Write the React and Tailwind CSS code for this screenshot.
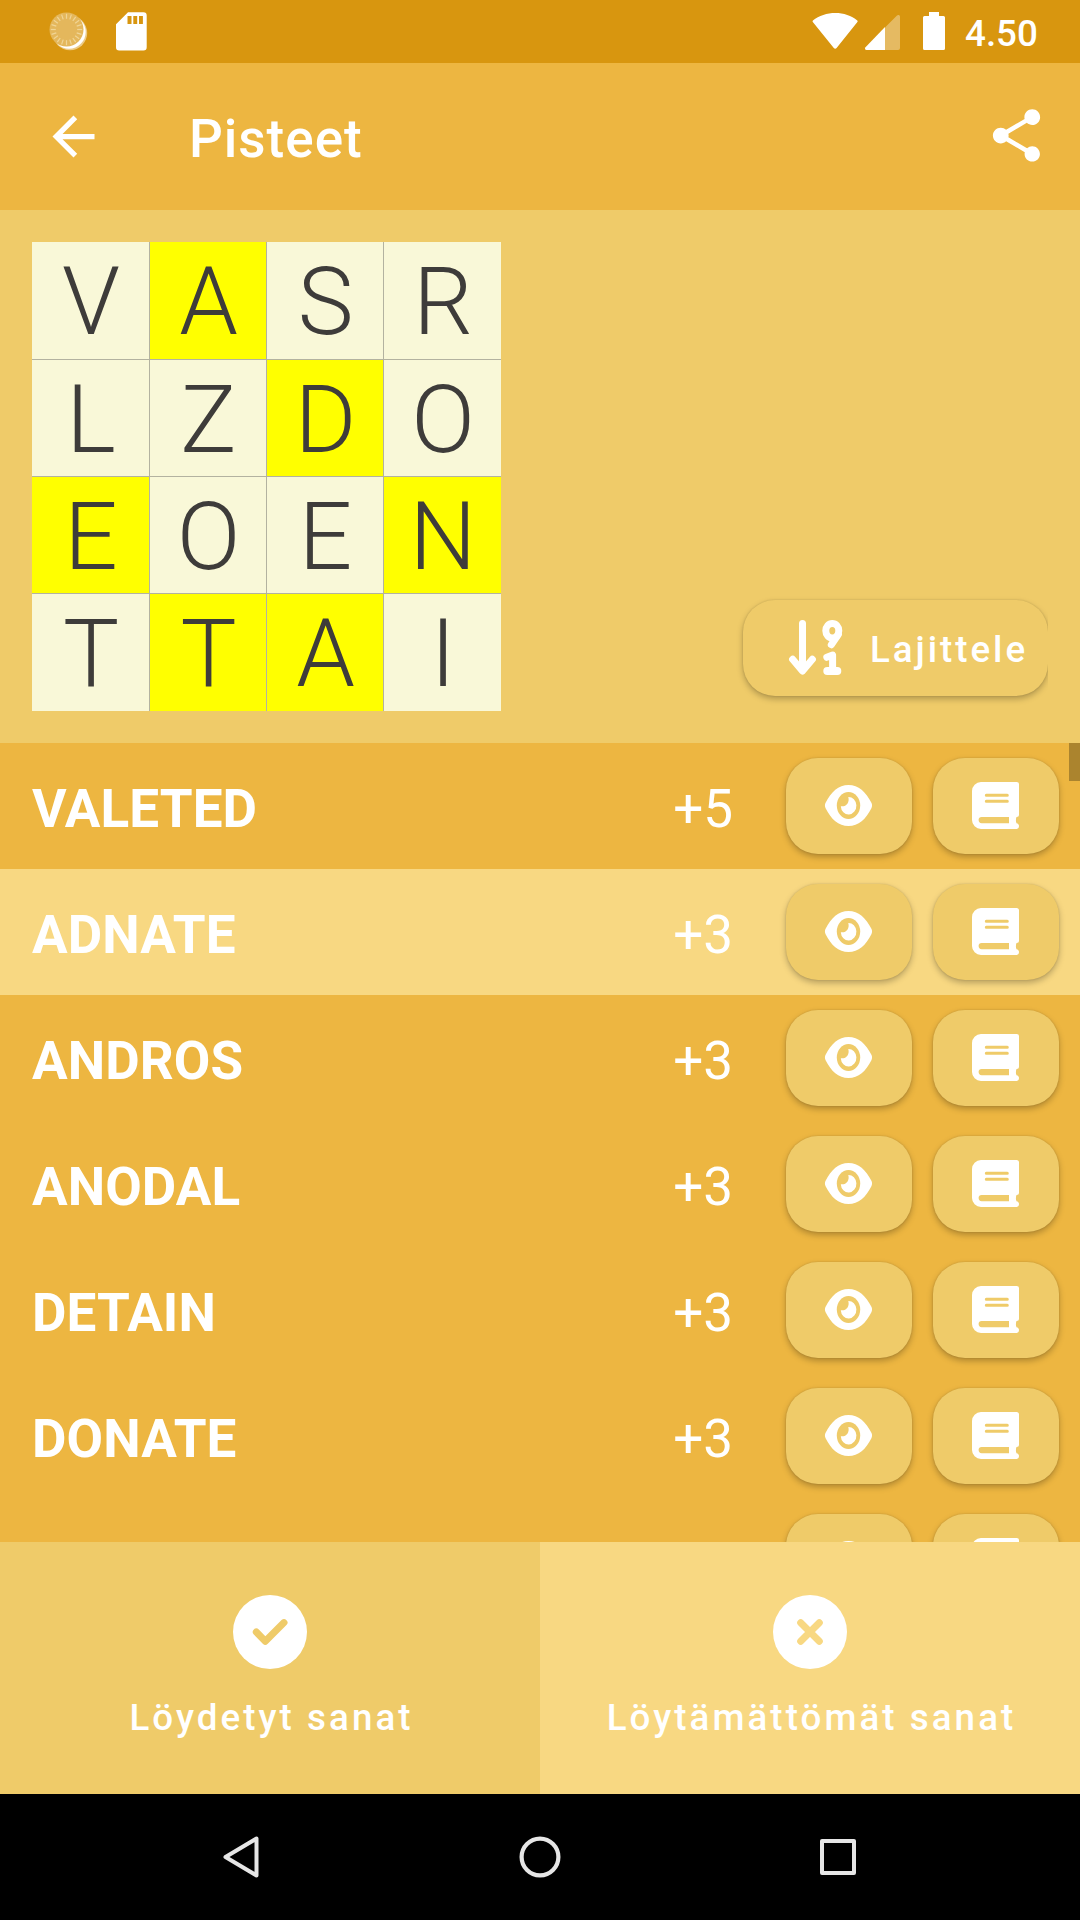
import React from "react";

const BOARD = [
  ["V", 0], ["A", 1], ["S", 0], ["R", 0],
  ["L", 0], ["Z", 0], ["D", 1], ["O", 0],
  ["E", 1], ["O", 0], ["E", 0], ["N", 1],
  ["T", 0], ["T", 1], ["A", 1], ["I", 0],
];

const WORDS = [
  { word: "VALETED", points: "+5" },
  { word: "ADNATE", points: "+3", selected: true },
  { word: "ANDROS", points: "+3" },
  { word: "ANODAL", points: "+3" },
  { word: "DETAIN", points: "+3" },
  { word: "DONATE", points: "+3" },
  { word: "", points: "" },
];

const TICKS = Array.from({ length: 20 }, (_, i) => i * 18);

function StatusBar() {
  return (
    <div className="flex h-[63px] shrink-0 items-start justify-between bg-[#d8960f]">
      <div className="flex">
        <svg className="ml-[48px] mt-[10px] h-[42px] w-[42px]" viewBox="48 10 42 42">
          <circle cx="70" cy="33" r="17.2" fill="#fff" fillOpacity=".5" />
          <circle cx="69" cy="32" r="16.7" fill="#fff" />
          <circle cx="66.500" cy="29.500" r="17" fill="#e4b75c" />
          {TICKS.map((a) => (
            <path key={a} d="M66.500 13.800v5" stroke="#f0d596" strokeWidth="1.200" transform={`rotate(${a} 66.5 29.5)`} />
          ))}
        </svg>
        <svg className="ml-[24px] mt-[10px] h-[42px] w-[36px]" viewBox="114 10 36 42">
          <path
            fill="#fff"
            fillRule="evenodd"
            d="M128 12.3h15.5a3.2 3.2 0 0 1 3.2 3.2v31.7a3.2 3.2 0 0 1-3.2 3.2h-24.3a3.2 3.2 0 0 1-3.2-3.2V24.3zM127.5 16v8h4v-8zM133.3 16v8h3.9v-8zM139 16v8h3.9v-8z"
          />
        </svg>
      </div>
      <div className="flex">
        <svg className="mt-[10px] h-[42px] w-[48px]" viewBox="811 10 48 42">
          <path fill="#fff" d="M812.9 20.5c12-10 33-10 44.4 0 .5.5.5 1 .1 1.6L836.6 48c-.8 1-2 1-2.8 0L812.8 22.1c-.4-.6-.4-1.100.1-1.600z" />
        </svg>
        <svg className="ml-[4px] mt-[10px] h-[42px] w-[39px]" viewBox="863 10 39 42">
          <path fill="#fff" fillOpacity=".35" d="M885 27.500L897 15.500c1.200-1 3-.5 3 1.200V48a2 2 0 0 1-2 2H885z" />
          <path fill="#fff" d="M885 27v23h-18.500c-1.500 0-2-1.700-1-2.800z" />
        </svg>
        <svg className="ml-[19px] mt-[10px] h-[42px] w-[26px]" viewBox="921 10 26 42">
          <path fill="#fff" d="M929 12h10v4h4.500a1.500 1.500 0 0 1 1.500 1.500v31a1.500 1.500 0 0 1-1.500 1.500h-19a1.500 1.500 0 0 1-1.500-1.500v-31a1.500 1.500 0 0 1 1.500-1.500H929z" />
        </svg>
        <div className="ml-[18px] mt-[12px] w-[115px] text-[36.75px] font-medium leading-[44px] text-white">4.50</div>
      </div>
    </div>
  );
}

function AppBar() {
  return (
    <div className="flex h-[147px] shrink-0 items-center bg-[#edb641]">
      <svg className="ml-[42px] h-[63px] w-[63px]" viewBox="0 0 24 24" fill="#fff">
        <path d="M20 11H7.830l5.590-5.590L12 4l-8 8 8 8 1.410-1.410L7.830 13H20z" />
      </svg>
      <h1 className="ml-[84px] mt-[4px] text-[53px] font-medium leading-[64px] tracking-[1px] text-white">Pisteet</h1>
      <svg className="mb-[2px] ml-auto mr-[32px] h-[63px] w-[63px]" viewBox="0 0 24 24" fill="#fff">
        <path d="M18 16.080c-.76 0-1.440.3-1.960.770L8.910 12.700c.05-.23.090-.46.090-.7s-.04-.47-.09-.7l7.050-4.110c.54.5 1.250.810 2.040.810 1.660 0 3-1.340 3-3s-1.340-3-3-3-3 1.340-3 3c0 .24.040.47.090.7L8.040 9.810C7.500 9.310 6.790 9 6 9c-1.660 0-3 1.340-3 3s1.340 3 3 3c.79 0 1.500-.31 2.040-.81l7.120 4.160c-.05.210-.08.430-.08.650 0 1.610 1.310 2.920 2.920 2.920s2.920-1.310 2.920-2.920-1.310-2.920-2.920-2.920z" />
      </svg>
    </div>
  );
}

function SortIcon() {
  return (
    <svg className="h-[57px] w-[55px] shrink-0" viewBox="788 619 55 57" fill="none" stroke="#fff" strokeWidth="7" strokeLinecap="round" strokeLinejoin="round">
      <path d="M802.500 623.500V670M792.600 659.300l9.900 11.700 9.900-11.700" />
      <path d="M798 664h9l-4.500 8z" fill="#fff" stroke="none" />
      <ellipse cx="832.300" cy="630.700" rx="6.500" ry="7.200" />
      <path d="M838.300 634.500l-7 10.200" />
      <path d="M826.800 657.300l5.800-2.200V670" />
      <path d="M827.300 671h10" strokeWidth="8" />
    </svg>
  );
}

function Board() {
  return (
    <div className="grid h-[469px] w-[469px] grid-cols-[117px_116px_116px_117px] grid-rows-[117px_116px_116px_117px] gap-px bg-[#b3b2a0]">
      {BOARD.map(([letter, on], i) => (
        <div
          key={i}
          className={`flex items-start justify-center overflow-hidden pl-px pt-[2px] text-[94px] font-light leading-[117px] text-[#3e3c3a] ${on ? "bg-[#ffff00]" : "bg-[#f9f8d8]"}`}
        >
          {letter}
        </div>
      ))}
    </div>
  );
}

function EyeIcon() {
  return (
    <svg className="h-[47px] w-[49px]" viewBox="0 0 49 47">
      <path fill="#fff" d="M24.500 3C34.500 3 42 10 47.400 20.800c.9 1.800.9 3.600 0 5.400C42 37 34.500 44 24.500 44S7 37 1.600 26.200c-.9-1.800-.9-3.600 0-5.400C7 10 14.500 3 24.500 3z" />
      <ellipse cx="24.500" cy="23.500" rx="11.700" ry="13.400" fill="#efcb69" />
      <path fill="#fff" d="M24.300 14.900A7.800 8.800 0 1 1 16.800 24.200C21.800 25.200 25.900 20.800 24.300 14.900z" />
    </svg>
  );
}

function BookIcon() {
  return (
    <svg className="h-[47px] w-[47px]" viewBox="0 0 47 47">
      <path fill="#fff" d="M9 0h35.500A2.500 2.500 0 0 1 47 2.500v30a2.500 2.500 0 0 1-2.500 2.500q-1.200 3.200 0 6.300c1.500.2 2.500 1.300 2.500 2.700A3 3 0 0 1 44 47H9a9 9 0 0 1-9-9V9a9 9 0 0 1 9-9z" />
      <path fill="#efcb69" d="M9.700 35H37v6.200H9.700a3.100 3.100 0 0 1 0-6.200z" />
      <path stroke="#efcb69" strokeWidth="3" strokeLinecap="round" d="M14.300 13.200h21M14.300 19.200h21" />
    </svg>
  );
}

function IconButton({ children }) {
  return (
    <button className="flex h-[96px] w-[126px] shrink-0 items-center justify-center rounded-[32px] bg-[#efcb69] pb-[1px] pr-[1px] shadow-[0_3px_6px_rgba(0,0,0,0.26),0_0_2px_rgba(0,0,0,0.14)]">
      {children}
    </button>
  );
}

function WordRow({ word, points, selected }) {
  return (
    <div className={`flex h-[126px] shrink-0 items-center pl-[32px] pr-[21px] text-[53px] leading-[62px] text-white ${selected ? "bg-[#f8d882]" : "bg-[#edb641]"}`}>
      <div className="mt-[5px] flex-1 font-bold tracking-[0.1px]">{word}</div>
      <div className="mt-[5px] pr-[53px]">{points}</div>
      <div className="flex gap-[21px]">
        <IconButton><EyeIcon /></IconButton>
        <IconButton><BookIcon /></IconButton>
      </div>
    </div>
  );
}

function Tab({ label, active, children }) {
  return (
    <div className={`flex flex-1 flex-col items-center ${active ? "bg-[#f8d882]" : "bg-[#efcb69]"}`}>
      <svg
        className={`mt-[53px] h-[74px] w-[74px] ${active ? "text-[#f8d882]" : "text-[#efcb69]"}`}
        viewBox="0 0 74 74"
        fill="none"
        stroke="currentColor"
        strokeWidth="7"
        strokeLinecap="round"
        strokeLinejoin="round"
      >
        <circle cx="37" cy="37" r="37" fill="#fff" stroke="none" />
        {children}
      </svg>
      <div className="mt-[27px] whitespace-nowrap pl-[3px] text-[36.75px] font-medium leading-[44px] tracking-[3.05px] text-white">{label}</div>
    </div>
  );
}

export default function App() {
  return (
    <div className="flex h-[1920px] w-[1080px] flex-col overflow-hidden bg-[#edb641] font-['Roboto',sans-serif]">
      <StatusBar />
      <AppBar />
      <div className="flex h-[533px] shrink-0 items-start justify-between bg-[#efcb69] px-[32px] pt-[32px]">
        <Board />
        <div className="-mb-[20px] -ml-[20px] mt-[348px] overflow-hidden pb-[20px] pl-[20px] pt-[10px]">
          <button className="flex h-[96px] w-[305px] items-center rounded-[32px] bg-[#efcb69] pb-[1px] pl-[45px] shadow-[0_3px_6px_rgba(0,0,0,0.26),0_0_2px_rgba(0,0,0,0.14)]">
            <SortIcon />
            <span className="ml-[27px] mt-[5px] text-[36.75px] font-medium leading-[44px] tracking-[2.95px] text-white">Lajittele</span>
          </button>
        </div>
      </div>
      <div className="relative flex h-[799px] shrink-0 flex-col overflow-hidden">
        {WORDS.map((w, i) => (
          <WordRow key={i} {...w} />
        ))}
        <div className="absolute right-0 top-0 h-[38px] w-[11px] bg-[#ab842e]" />
      </div>
      <div className="flex h-[252px] shrink-0">
        <Tab label="Löydetyt sanat">
          <path d="M23.300 37l9 9.200L51 27.600" />
        </Tab>
        <Tab label="Löytämättömät sanat" active>
          <path d="M27.700 27.700l18.600 18.600M46.300 27.700L27.700 46.300" />
        </Tab>
      </div>
      <div className="flex h-[126px] shrink-0 items-center bg-black">
        <svg className="ml-[219px] h-[46px] w-[42px]" viewBox="219 1834 42 46" fill="none" stroke="#e6e6e6" strokeWidth="4" strokeLinejoin="round">
          <path d="M256.500 1838.500v37L225.500 1857z" />
        </svg>
        <svg className="ml-[256px] h-[46px] w-[46px]" viewBox="517 1834 46 46" fill="none" stroke="#e6e6e6" strokeWidth="4.200">
          <circle cx="540" cy="1857" r="18.400" />
        </svg>
        <svg className="ml-[255px] h-[46px] w-[40px]" viewBox="818 1834 40 46" fill="none" stroke="#e6e6e6" strokeWidth="4" strokeLinejoin="round">
          <path d="M822 1841h32v32h-32z" />
        </svg>
      </div>
    </div>
  );
}
